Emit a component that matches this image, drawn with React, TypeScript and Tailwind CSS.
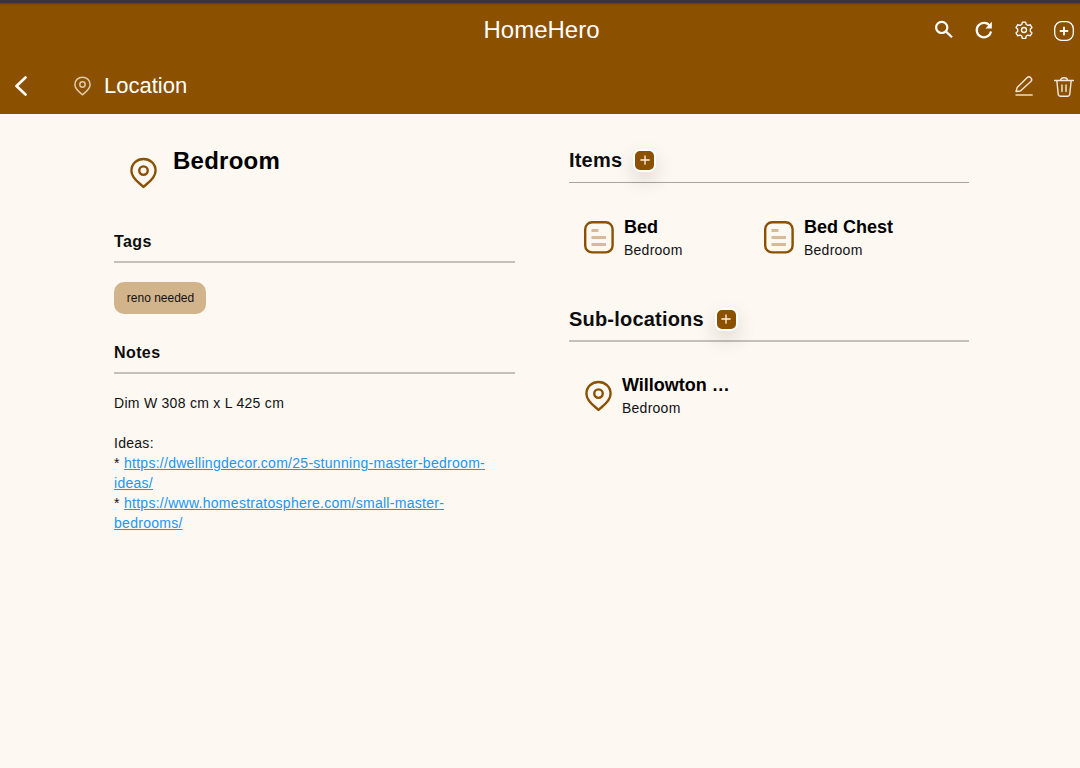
import React from 'react'

const brown = '#8b5000'

const PinIcon = ({ className }: { className: string }) => (
    <svg viewBox="0 0 28 32" fill="none" stroke="currentColor" strokeWidth="2.5" className={className}>
        <path d="M14 30.5 C10 26.5 1.5 21.5 1.5 13.8 C1.5 6 7.5 1.5 14 1.5 C20.5 1.5 26.5 6 26.5 13.8 C26.5 21.5 18 26.5 14 30.5 Z" strokeLinejoin="round" />
        <circle cx="14" cy="13.5" r="4.4" />
    </svg>
)

const ItemIcon = () => (
    <svg viewBox="0 0 30 33" fill="none" className="w-[30px] h-[33px] shrink-0">
        <rect x="1.2" y="1.2" width="27.4" height="30.2" rx="7" stroke={brown} strokeWidth="2.4" />
        <path d="M7.5 9.6 H14.5 M7.5 16.5 H22 M7.5 23.5 H22" stroke="#d8bb94" strokeWidth="3" />
    </svg>
)

const AddButton = () => (
    <button className="w-[23px] h-[23px] rounded-[7px] bg-[#8b5000] border-2 border-white flex items-center justify-center shadow-[0_8px_20px_rgba(0,0,0,0.14)]">
        <svg viewBox="0 0 12 12" className="w-[10px] h-[10px]" stroke="#fdf3e6" strokeWidth="1.6" strokeLinecap="round">
            <path d="M6 1 V11 M1 6 H11" />
        </svg>
    </button>
)

const SectionTitle = ({ title }: { title: string }) => (
    <div className="border-b-2 border-[#c4c0bb] h-[30px]">
        <h3 className="text-[16px] leading-[18px] font-bold tracking-[0.4px] text-[#0d0d0d]">{title}</h3>
    </div>
)

const App = () => {
    return (
        <div className="w-[1080px] h-[768px] bg-[#fdf8f2] font-['Liberation_Sans',Arial,sans-serif] text-black overflow-hidden">
            <header className="h-[114px] bg-[#8b5000] border-t-[3px] border-[#38383a] text-white shadow-[inset_0_3px_2px_-2px_rgba(0,0,0,0.25)]">
                <div className="h-[53px] flex items-center relative">
                    <h1 className="w-full pl-[3px] text-center text-[24px] leading-[30px]">HomeHero</h1>
                    <div className="absolute right-[6px] top-[17px] flex items-center gap-[20px]">
                        <svg viewBox="0 0 20 20" fill="none" stroke="#fff" strokeWidth="2.2" className="w-[20px] h-[20px]">
                            <circle cx="7.7" cy="7.4" r="5.6" />
                            <path d="M11.8 11.4 L18 17.2" />
                        </svg>
                        <svg viewBox="0 0 20 20" fill="none" className="w-[20px] h-[20px]">
                            <path d="M16 6.2 A7.2 7.2 0 1 0 17 11.5" stroke="#fff" strokeWidth="2.2" />
                            <path d="M17.8 1.8 V8.4 H11.4 Z" fill="#fff" />
                        </svg>
                        <svg viewBox="0 0 24 24" fill="none" stroke="#fff" strokeWidth="1.6" strokeLinejoin="round" className="w-[20px] h-[20px]">
                            <path d="M10 2.5 h4 l.7 2.9 2 1.1 2.9-.8 2 3.4-2.1 2.1 v2.2 l2.1 2.1-2 3.4-2.9-.8-2 1.1-.7 2.9 h-4 l-.7-2.9-2-1.1-2.9.8-2-3.4 2.1-2.1 v-2.2 L2.4 9.1 l2-3.4 2.9.8 2-1.1 Z" />
                            <circle cx="12" cy="12" r="3" />
                        </svg>
                        <svg viewBox="0 0 20 20" fill="none" stroke="#fff" className="w-[20px] h-[20px] translate-y-[1px]">
                            <rect x="0.7" y="0.7" width="18.6" height="18.6" rx="7" strokeWidth="1.3" />
                            <path d="M10 6.5 V13.5 M6.5 10 H13.5" strokeWidth="1.8" strokeLinecap="round" />
                        </svg>
                    </div>
                </div>
                <div className="h-[58px] flex items-center relative">
                    <svg viewBox="0 0 14 20" fill="none" stroke="#fff" strokeWidth="2.6" strokeLinecap="round" strokeLinejoin="round" className="w-[14px] h-[20px] ml-[14px] translate-y-[1px]">
                        <path d="M11.5 1.5 L2.5 10 L11.5 18.5" />
                    </svg>
                    <PinIcon className="w-[17px] h-[20px] ml-[46px] text-[#e0c9a8] translate-y-[1px]" />
                    <span className="ml-[13px] text-[22px] leading-[26px] translate-y-[1px]">Location</span>
                    <div className="absolute right-[6px] top-[20px] flex items-center gap-[20px]">
                        <svg viewBox="0 0 20 21" fill="none" className="w-[20px] h-[21px]">
                            <path d="M2 15.5 L3.2 11.4 L13 1.8 A2 2 0 0 1 16.8 5.6 L6.4 15 Z" stroke="#f5e9da" strokeWidth="1.4" strokeLinejoin="round" />
                            <path d="M1.5 19 H18.7" stroke="#e8d4b8" strokeWidth="1.6" />
                        </svg>
                        <svg viewBox="0 0 20 21" fill="none" stroke="#f5e9da" strokeWidth="1.4" className="w-[20px] h-[21px]">
                            <path d="M0.5 4.5 H19.5 M6.5 4.5 C6.5 0.8 13.5 0.8 13.5 4.5 M2.8 4.5 L4.2 18 C4.4 19.6 5.4 20.2 6.5 20.2 H13.5 C14.6 20.2 15.6 19.6 15.8 18 L17.2 4.5 M8 9 V15.5 M12 9 V15.5" strokeLinecap="round" />
                        </svg>
                    </div>
                </div>
            </header>

            <main className="flex pl-[114px] pt-[33px]">
                <section className="w-[401px]">
                    <div className="h-[86px] flex items-start">
                        <PinIcon className="w-[27px] h-[32px] ml-[16px] mt-[10px] text-[#8b5000]" />
                        <h2 className="ml-[16px] text-[24px] leading-[28px] font-bold tracking-[0.25px]">Bedroom</h2>
                    </div>
                    <SectionTitle title="Tags" />
                    <div className="mt-[19px] w-[92px] h-[32px] pl-[1px] rounded-[10px] bg-[#d2b48c] flex items-center justify-center text-[12px] text-[#111]">
                        reno needed
                    </div>
                    <div className="mt-[30px]">
                        <SectionTitle title="Notes" />
                    </div>
                    <div className="mt-[19px] text-[14px] leading-[20px] tracking-[0.28px] text-[#111]">
                        <p>Dim W 308 cm x L 425 cm</p>
                        <p className="mt-[20px]">Ideas:</p>
                        <p>* <a className="text-[#2196f3] underline">https://dwellingdecor.com/25-stunning-master-bedroom-<br />ideas/</a></p>
                        <p>* <a className="text-[#2196f3] underline">https://www.homestratosphere.com/small-master-<br />bedrooms/</a></p>
                    </div>
                </section>

                <section className="w-[400px] ml-[54px]">
                    <div className="flex items-center gap-[11px] h-[24px] mt-[1px]">
                        <h3 className="text-[20px] leading-[24px] font-bold tracking-[0.2px] text-[#0d0d0d]">Items</h3>
                        <AddButton />
                    </div>
                    <div className="h-[11px] border-b border-[#a8a4a0]" />
                    <div className="flex mt-[32px] pl-[15px] h-[45px]">
                        <div className="w-[180px] flex items-center gap-[10px]">
                            <ItemIcon />
                            <div className="pt-[1px]">
                                <div className="text-[18px] leading-[22px] font-bold">Bed</div>
                                <div className="mt-[2px] text-[14px] leading-[20px] tracking-[0.25px] text-[#111]">Bedroom</div>
                            </div>
                        </div>
                        <div className="w-[180px] flex items-center gap-[10px]">
                            <ItemIcon />
                            <div className="pt-[1px]">
                                <div className="text-[18px] leading-[22px] font-bold">Bed Chest</div>
                                <div className="mt-[2px] text-[14px] leading-[20px] tracking-[0.25px] text-[#111]">Bedroom</div>
                            </div>
                        </div>
                    </div>
                    <div className="mt-[47px] flex items-center gap-[11px] h-[24px]">
                        <h3 className="text-[20px] leading-[24px] font-bold tracking-[0.2px] text-[#0d0d0d]">Sub-locations</h3>
                        <AddButton />
                    </div>
                    <div className="h-[11px] border-b-2 border-[#c4c0bb]" />
                    <div className="flex items-center gap-[10px] mt-[31px] pl-[16px] h-[45px]">
                        <PinIcon className="w-[27px] h-[32px] text-[#8b5000]" />
                        <div className="pt-[1px]">
                            <div className="text-[18px] leading-[22px] font-bold">Willowton …</div>
                            <div className="mt-[2px] text-[14px] leading-[20px] tracking-[0.25px] text-[#111]">Bedroom</div>
                        </div>
                    </div>
                </section>
            </main>
        </div>
    )
}

export default App
